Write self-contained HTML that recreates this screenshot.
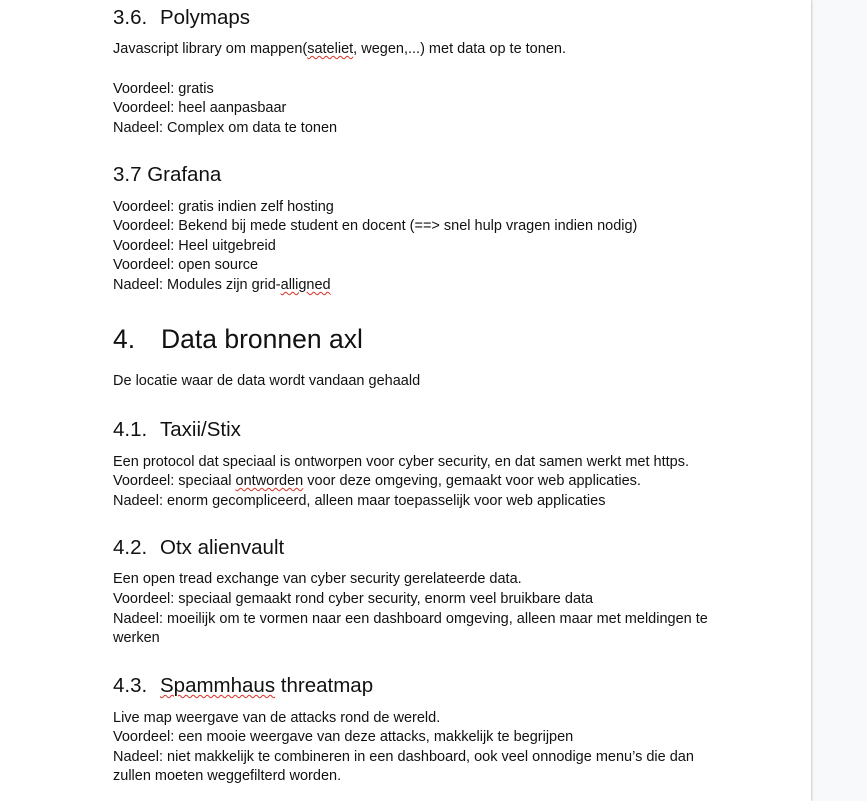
<!DOCTYPE html>
<html><head><meta charset="utf-8"><style>
html,body{margin:0;padding:0;width:867px;height:801px;overflow:hidden;background:#f8f9fa;}
.page{position:absolute;left:0;top:0;width:811px;height:801px;background:#fff;box-shadow:1px 0 2px rgba(0,0,0,.18);}
.l{position:absolute;left:113px;font-family:"Liberation Sans",Arial,sans-serif;font-size:14.5px;line-height:20px;color:#111;white-space:nowrap;}
.h{font-size:20.5px;line-height:24px;}
.h1{font-size:26.5px;line-height:30px;}
.n{display:inline-block;width:47px;}
.n1{display:inline-block;width:48px;}
.sp{text-decoration:underline wavy #d93025;text-decoration-thickness:1px;text-underline-offset:2px;}
</style></head><body><div class="page">
<div class="l h" style="top:6px"><span class="n">3.6.</span>Polymaps</div>
<div class="l" style="top:39px">Javascript library om mappen(<span class="sp">sateliet</span>, wegen,...) met data op te tonen.</div>
<div class="l" style="top:79px">Voordeel: gratis</div>
<div class="l" style="top:98px">Voordeel: heel aanpasbaar</div>
<div class="l" style="top:118px">Nadeel: Complex om data te tonen</div>
<div class="l h" style="top:163px">3.7 Grafana</div>
<div class="l" style="top:197px">Voordeel: gratis indien zelf hosting</div>
<div class="l" style="top:216px">Voordeel: Bekend bij mede student en docent (==&gt; snel hulp vragen indien nodig)</div>
<div class="l" style="top:236px">Voordeel: Heel uitgebreid</div>
<div class="l" style="top:255px">Voordeel: open source</div>
<div class="l" style="top:275px">Nadeel: Modules zijn grid-<span class="sp">alligned</span></div>
<div class="l h1" style="top:324px"><span class="n1">4.</span>Data bronnen axl</div>
<div class="l" style="top:371px">De locatie waar de data wordt vandaan gehaald</div>
<div class="l h" style="top:418px"><span class="n">4.1.</span>Taxii/Stix</div>
<div class="l" style="top:452px">Een protocol dat speciaal is ontworpen voor cyber security, en dat samen werkt met https.</div>
<div class="l" style="top:471px">Voordeel: speciaal <span class="sp">ontworden</span> voor deze omgeving, gemaakt voor web applicaties.</div>
<div class="l" style="top:491px">Nadeel: enorm gecompliceerd, alleen maar toepasselijk voor web applicaties</div>
<div class="l h" style="top:536px"><span class="n">4.2.</span>Otx alienvault</div>
<div class="l" style="top:569px">Een open tread exchange van cyber security gerelateerde data.</div>
<div class="l" style="top:589px">Voordeel: speciaal gemaakt rond cyber security, enorm veel bruikbare data</div>
<div class="l" style="top:609px">Nadeel: moeilijk om te vormen naar een dashboard omgeving, alleen maar met meldingen te</div>
<div class="l" style="top:628px">werken</div>
<div class="l h" style="top:674px"><span class="n">4.3.</span><span class="sp">Spammhaus</span> threatmap</div>
<div class="l" style="top:708px">Live map weergave van de attacks rond de wereld.</div>
<div class="l" style="top:727px">Voordeel: een mooie weergave van deze attacks, makkelijk te begrijpen</div>
<div class="l" style="top:747px">Nadeel: niet makkelijk te combineren in een dashboard, ook veel onnodige menu’s die dan</div>
<div class="l" style="top:766px">zullen moeten weggefilterd worden.</div>
</div></body></html>
